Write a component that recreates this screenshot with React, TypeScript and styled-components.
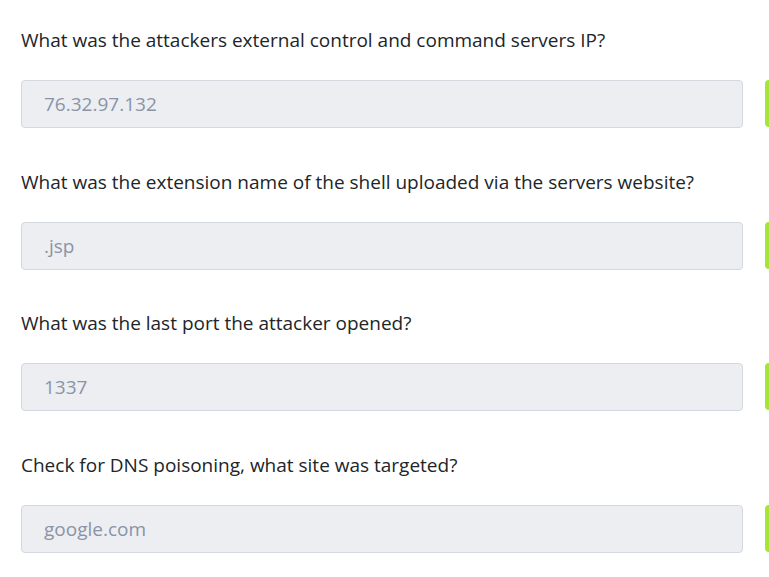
import React from "react";
import styled, { createGlobalStyle } from "styled-components";

const GlobalStyle = createGlobalStyle`
    body {
        margin: 0;
        background: #ffffff;
        font-family: "Open Sans", "Liberation Sans", sans-serif;
    }
`;

const Page = styled.div`
    padding: 27px 0 0 21px;
    display: flex;
    flex-direction: column;
    overflow: hidden;
`;

const Question = styled.div`
    display: flex;
    flex-direction: column;
    margin-bottom: 40.5px;
`;

const Label = styled.p`
    margin: 0 0 26px;
    font-size: 19px;
    line-height: 27px;
    color: #212529;
    white-space: nowrap;
`;

const Row = styled.div`
    display: flex;
    gap: 22px;
`;

const Answer = styled.input`
    box-sizing: border-box;
    width: 722px;
    height: 48px;
    flex: none;
    padding: 0 22px;
    border: 1px solid #d3d7df;
    border-radius: 4px;
    background: #eceef2;
    font-family: inherit;
    font-size: 19px;
    color: #8a94a6;
    outline: none;
`;

const Submit = styled.button`
    width: 100px;
    height: 47px;
    flex: none;
    border: none;
    border-radius: 4px;
    background: #a3e635;
`;

const questions = [
    { text: "What was the attackers external control and command servers IP?", answer: "76.32.97.132" },
    { text: "What was the extension name of the shell uploaded via the servers website?", answer: ".jsp" },
    { text: "What was the last port the attacker opened?", answer: "1337" },
    { text: "Check for DNS poisoning, what site was targeted?", answer: "google.com" },
];

export default function App() {
    return (
        <>
            <GlobalStyle />
            <Page>
                {questions.map((q) => (
                    <Question key={q.text}>
                        <Label>{q.text}</Label>
                        <Row>
                            <Answer readOnly value={q.answer} />
                            <Submit />
                        </Row>
                    </Question>
                ))}
            </Page>
        </>
    );
}
